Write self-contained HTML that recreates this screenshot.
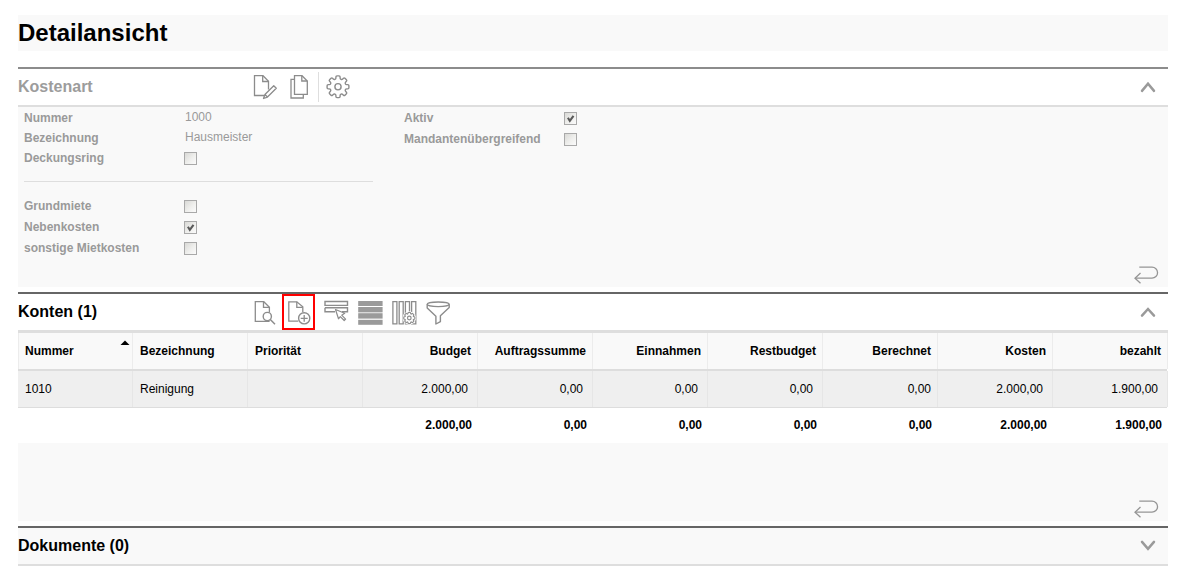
<!DOCTYPE html>
<html><head><meta charset="utf-8">
<style>
*{margin:0;padding:0;box-sizing:border-box}
html,body{width:1185px;height:570px;overflow:hidden;background:#fff;font-family:"Liberation Sans",sans-serif;}
.a{position:absolute}
.t{white-space:nowrap;line-height:1}
.line{left:18px;width:1150px}
.lbl{font-size:12px;font-weight:bold;color:#9a9a9a}
.val{font-size:12px;color:#9a9a9a}
.cb{width:13px;height:13px;border:1px solid #a9a9a9;background:linear-gradient(135deg,#d9d9d6 0%,#efefed 55%,#fbfbfb 100%)}
.th{font-size:12px;font-weight:bold;color:#000}
.td{font-size:12px;color:#000}
.r{text-align:right}
</style></head><body>
<div class="a" style="left:18px;top:15px;width:1150px;height:36px;background:#f9f9f9"></div>
<div class="a t" style="left:18px;top:21px;font-size:24px;font-weight:bold;color:#000">Detailansicht</div>
<div class="a line" style="top:67px;height:2px;background:#8c8c8c"></div>
<div class="a t" style="left:18px;top:79px;font-size:16px;font-weight:bold;color:#9c9c9c">Kostenart</div>
<div class="a" style="left:318px;top:72px;width:1px;height:30px;background:#dedede"></div>
<div class="a line" style="top:105px;height:2px;background:#dedede"></div>
<div class="a line" style="top:107px;height:180px;background:#f9f9f9"></div>
<div class="a t lbl" style="left:24px;top:112px">Nummer</div>
<div class="a t val" style="left:185px;top:111px">1000</div>
<div class="a t lbl" style="left:24px;top:132px">Bezeichnung</div>
<div class="a t val" style="left:185px;top:131px">Hausmeister</div>
<div class="a t lbl" style="left:24px;top:152px">Deckungsring</div>
<div class="a cb" style="left:184px;top:152px"></div>
<div class="a" style="left:24px;top:181px;width:349px;height:1px;background:#dedede"></div>
<div class="a t lbl" style="left:24px;top:200px">Grundmiete</div>
<div class="a cb" style="left:184px;top:200px"></div>
<div class="a t lbl" style="left:24px;top:221px">Nebenkosten</div>
<div class="a cb" style="left:184px;top:221px"></div>
<svg class="a" style="left:184px;top:221px" width="13" height="13"><path d="M3.9,5.8 L5.8,8.9 L9.5,3.8" stroke="#5a5a5a" stroke-width="2.1" fill="none"/></svg>
<div class="a t lbl" style="left:24px;top:242px">sonstige Mietkosten</div>
<div class="a cb" style="left:184px;top:242px"></div>
<div class="a t lbl" style="left:404px;top:112px">Aktiv</div>
<div class="a cb" style="left:564px;top:112px"></div>
<svg class="a" style="left:564px;top:112px" width="13" height="13"><path d="M3.9,5.8 L5.8,8.9 L9.5,3.8" stroke="#5a5a5a" stroke-width="2.1" fill="none"/></svg>
<div class="a t lbl" style="left:404px;top:133px">Mandantenübergreifend</div>
<div class="a cb" style="left:564px;top:133px"></div>
<div class="a line" style="top:292px;height:2px;background:#666"></div>
<div class="a t" style="left:18px;top:304px;font-size:16px;font-weight:bold;color:#000">Konten (1)</div>
<div class="a" style="left:282px;top:294px;width:33px;height:36px;border:2px solid #f00"></div>
<div class="a line" style="top:330px;height:3px;background:#dedede"></div>
<div class="a" style="left:18px;width:1149px;top:333px;height:36px;background:#f9f9f9"></div>
<div class="a" style="left:18px;width:1149px;top:369px;height:2px;background:#dddddd"></div>
<div class="a" style="left:18px;width:1149px;top:371px;height:36px;background:#efefef"></div>
<div class="a" style="left:18px;width:1149px;top:407px;height:1px;background:#dddddd"></div>
<div class="a" style="left:18px;top:333px;width:1px;height:36px;background:#ececec"></div>
<div class="a" style="left:132px;top:333px;width:1px;height:36px;background:#ececec"></div>
<div class="a" style="left:132px;top:371px;width:1px;height:36px;background:#e6e6e6"></div>
<div class="a t th" style="left:25px;top:345px">Nummer</div>
<div class="a t td" style="left:25px;top:383px">1010</div>
<div class="a" style="left:247px;top:333px;width:1px;height:36px;background:#ececec"></div>
<div class="a" style="left:247px;top:371px;width:1px;height:36px;background:#e6e6e6"></div>
<div class="a t th" style="left:140px;top:345px">Bezeichnung</div>
<div class="a t td" style="left:140px;top:383px">Reinigung</div>
<div class="a" style="left:362px;top:333px;width:1px;height:36px;background:#ececec"></div>
<div class="a" style="left:362px;top:371px;width:1px;height:36px;background:#e6e6e6"></div>
<div class="a t th" style="left:255px;top:345px">Priorität</div>
<div class="a" style="left:477px;top:333px;width:1px;height:36px;background:#ececec"></div>
<div class="a" style="left:477px;top:371px;width:1px;height:36px;background:#e6e6e6"></div>
<div class="a t th r" style="left:363px;width:108px;top:345px">Budget</div>
<div class="a t td r" style="left:363px;width:105px;top:383px">2.000,00</div>
<div class="a t th r" style="left:363px;width:109px;top:419px">2.000,00</div>
<div class="a" style="left:592px;top:333px;width:1px;height:36px;background:#ececec"></div>
<div class="a" style="left:592px;top:371px;width:1px;height:36px;background:#e6e6e6"></div>
<div class="a t th r" style="left:478px;width:108px;top:345px">Auftragssumme</div>
<div class="a t td r" style="left:478px;width:105px;top:383px">0,00</div>
<div class="a t th r" style="left:478px;width:109px;top:419px">0,00</div>
<div class="a" style="left:707px;top:333px;width:1px;height:36px;background:#ececec"></div>
<div class="a" style="left:707px;top:371px;width:1px;height:36px;background:#e6e6e6"></div>
<div class="a t th r" style="left:593px;width:108px;top:345px">Einnahmen</div>
<div class="a t td r" style="left:593px;width:105px;top:383px">0,00</div>
<div class="a t th r" style="left:593px;width:109px;top:419px">0,00</div>
<div class="a" style="left:822px;top:333px;width:1px;height:36px;background:#ececec"></div>
<div class="a" style="left:822px;top:371px;width:1px;height:36px;background:#e6e6e6"></div>
<div class="a t th r" style="left:708px;width:108px;top:345px">Restbudget</div>
<div class="a t td r" style="left:708px;width:105px;top:383px">0,00</div>
<div class="a t th r" style="left:708px;width:109px;top:419px">0,00</div>
<div class="a" style="left:937px;top:333px;width:1px;height:36px;background:#ececec"></div>
<div class="a" style="left:937px;top:371px;width:1px;height:36px;background:#e6e6e6"></div>
<div class="a t th r" style="left:823px;width:108px;top:345px">Berechnet</div>
<div class="a t td r" style="left:823px;width:108px;top:383px">0,00</div>
<div class="a t th r" style="left:823px;width:109px;top:419px">0,00</div>
<div class="a" style="left:1052px;top:333px;width:1px;height:36px;background:#ececec"></div>
<div class="a" style="left:1052px;top:371px;width:1px;height:36px;background:#e6e6e6"></div>
<div class="a t th r" style="left:938px;width:108px;top:345px">Kosten</div>
<div class="a t td r" style="left:938px;width:105px;top:383px">2.000,00</div>
<div class="a t th r" style="left:938px;width:109px;top:419px">2.000,00</div>
<div class="a" style="left:1167px;top:333px;width:1px;height:36px;background:#ececec"></div>
<div class="a" style="left:1167px;top:371px;width:1px;height:36px;background:#e6e6e6"></div>
<div class="a t th r" style="left:1053px;width:108px;top:345px">bezahlt</div>
<div class="a t td r" style="left:1053px;width:105px;top:383px">1.900,00</div>
<div class="a t th r" style="left:1053px;width:109px;top:419px">1.900,00</div>
<svg class="a" style="left:0;top:0" width="1185" height="570"><path d="M120.5,345 L125,340.5 L129.5,345Z" fill="#000"/></svg>
<div class="a line" style="top:443px;height:78px;background:#f9f9f9"></div>
<div class="a line" style="top:526px;height:2px;background:#666"></div>
<div class="a line" style="top:528px;height:36px;background:#f9f9f9"></div>
<div class="a t" style="left:18px;top:538px;font-size:16px;font-weight:bold;color:#000">Dokumente (0)</div>
<div class="a line" style="top:564px;height:2px;background:#dedede"></div>
<svg class="a" style="left:0;top:0" width="1185" height="570"><path d="M264,95.5 H254.5 V75.7 H263 L268.5,81.2 V89.5" stroke="#8c8c8c" stroke-width="1.3" fill="none" /><path d="M262.7,75.7 V81.5 H268.5" stroke="#8c8c8c" stroke-width="1.3" fill="none" /><path d="M263.5,98.5 L264.92,94.53999999999999 L273.75,85.71000000000001 L276.29,88.25 L267.46,97.08 Z M264.92,94.53999999999999 L267.46,97.08" stroke="#8c8c8c" stroke-width="1.3" fill="none" stroke-linejoin="round"/><path d="M294.5,79.3 H291 V98 H303.3 V94.5" stroke="#8c8c8c" stroke-width="1.3" fill="none" /><path d="M294.5,94.3 V75.7 H302 L307.3,81 V94.3 Z" stroke="#8c8c8c" stroke-width="1.3" fill="none" /><path d="M301.8,75.7 V81 H307.3" stroke="#8c8c8c" stroke-width="1.3" fill="none" /><path d="M334.96,79.42Q335.90,79.03 335.90,77.93L335.90,76.95Q335.90,75.85 337.00,75.85L339.00,75.85Q340.10,75.85 340.10,76.95L340.10,77.93Q340.10,79.03 341.04,79.42L341.04,79.42Q341.97,79.81 342.75,79.03L343.44,78.34Q344.22,77.56 345.00,78.34L346.41,79.75Q347.19,80.53 346.41,81.31L345.72,82.00Q344.94,82.78 345.33,83.71L345.33,83.71Q345.72,84.65 346.82,84.65L347.80,84.65Q348.90,84.65 348.90,85.75L348.90,87.75Q348.90,88.85 347.80,88.85L346.82,88.85Q345.72,88.85 345.33,89.79L345.33,89.79Q344.94,90.72 345.72,91.50L346.41,92.19Q347.19,92.97 346.41,93.75L345.00,95.16Q344.22,95.94 343.44,95.16L342.75,94.47Q341.97,93.69 341.04,94.08L341.04,94.08Q340.10,94.47 340.10,95.57L340.10,96.55Q340.10,97.65 339.00,97.65L337.00,97.65Q335.90,97.65 335.90,96.55L335.90,95.57Q335.90,94.47 334.96,94.08L334.96,94.08Q334.03,93.69 333.25,94.47L332.56,95.16Q331.78,95.94 331.00,95.16L329.59,93.75Q328.81,92.97 329.59,92.19L330.28,91.50Q331.06,90.72 330.67,89.79L330.67,89.79Q330.28,88.85 329.18,88.85L328.20,88.85Q327.10,88.85 327.10,87.75L327.10,85.75Q327.10,84.65 328.20,84.65L329.18,84.65Q330.28,84.65 330.67,83.71L330.67,83.71Q331.06,82.78 330.28,82.00L329.59,81.31Q328.81,80.53 329.59,79.75L331.00,78.34Q331.78,77.56 332.56,78.34L333.25,79.03Q334.03,79.81 334.96,79.42Z" stroke="#8c8c8c" stroke-width="1.4" fill="none" stroke-linejoin="round"/><circle cx="338" cy="86.75" r="3.1" stroke="#8c8c8c" stroke-width="1.4" fill="none"/><path d="M1142,90.9 L1148,83.8 L1154,90.9" stroke="#9a9a9a" stroke-width="2.5" fill="none" stroke-linecap="round"/><path d="M1142,315.6 L1148,309 L1154,315.6" stroke="#9a9a9a" stroke-width="2.5" fill="none" stroke-linecap="round"/><path d="M1142,541.9 L1148,548.9 L1154,541.9" stroke="#9a9a9a" stroke-width="2.5" fill="none" stroke-linecap="round"/><path d="M1139.3,267.1 H1152 A5.55,5.55 0 0 1 1152,278.2 H1135" stroke="#959595" stroke-width="1.3" fill="none" /><path d="M1140.5,273 L1135,278.2 L1140.5,283.3" stroke="#959595" stroke-width="1.3" fill="none" /><path d="M1139.3,501.1 H1152 A5.55,5.55 0 0 1 1152,512.2 H1135" stroke="#959595" stroke-width="1.3" fill="none" /><path d="M1140.5,507 L1135,512.2 L1140.5,517.3" stroke="#959595" stroke-width="1.3" fill="none" /><path d="M269.6,321.4 H255.3 V301.7 H263.8 L269.4,307.2 V312.4" stroke="#8c8c8c" stroke-width="1.3" fill="none" /><path d="M263.5,301.7 V307.3 H269.4" stroke="#8c8c8c" stroke-width="1.3" fill="none" /><circle cx="267.3" cy="316.5" r="4.1" stroke="#8c8c8c" stroke-width="1.4" fill="#fff"/><path d="M270.3,319.5 L275,324.2" stroke="#8c8c8c" stroke-width="1.5" fill="none" /><path d="M298.2,321.1 H288.8 V301.8 H296.8 L302.8,306.8 V312.3" stroke="#8c8c8c" stroke-width="1.3" fill="none" /><path d="M296.8,301.8 V307.4 H302.8" stroke="#8c8c8c" stroke-width="1.3" fill="none" /><circle cx="304.2" cy="318.3" r="5.6" stroke="#8c8c8c" stroke-width="1.4" fill="none"/><path d="M300.7,318.3 H307.7 M304.2,314.9 V321.7" stroke="#8c8c8c" stroke-width="1.3" fill="none" /><path d="M325,301.5 H347.5 V305.4 H325 Z" stroke="#8c8c8c" stroke-width="1.4" fill="none" /><path d="M325,307.8 H347.5 V311.7 H342 M335,311.7 H325 V307.8" stroke="#8c8c8c" stroke-width="1.4" fill="none" /><path d="M335.5,309.5 L338.5,318.8 L340.3,316.6 L344.2,320.5 L345.6,319.1 L341.7,315.2 L344.7,313.3 Z" stroke="#8c8c8c" stroke-width="1.2" fill="none" stroke-linejoin="round"/><rect x="358.2" y="301" width="24.4" height="5" fill="#9a9a9a"/><rect x="358.2" y="307" width="24.4" height="5" fill="#9a9a9a"/><rect x="358.2" y="312.3" width="24.4" height="0.7" fill="#c8c8c8"/><rect x="358.2" y="313.2" width="24.4" height="5.4" fill="#9a9a9a"/><rect x="358.2" y="319.8" width="24.4" height="5" fill="#9a9a9a"/><path d="M392.9,301.7 H396.9 V323.8 H392.9 Z" stroke="#8c8c8c" stroke-width="1.3" fill="none" /><path d="M399.2,301.7 H403.2 V323.8 H399.2 Z" stroke="#8c8c8c" stroke-width="1.3" fill="none" /><path d="M405.4,301.7 H409.5 V323.8 H405.4 Z" stroke="#8c8c8c" stroke-width="1.3" fill="none" /><path d="M411.6,301.7 H415.8 V323.8 H411.6 Z" stroke="#8c8c8c" stroke-width="1.3" fill="none" /><path d="M408.01,311.53L408.01,311.53L410.59,311.53L410.59,311.53L412.97,312.51L412.97,312.51L414.79,314.33L414.79,314.33L415.77,316.71L415.77,316.71L415.77,319.29L415.77,319.29L414.79,321.67L414.79,321.67L412.97,323.49L412.97,323.49L410.59,324.47L410.59,324.47L408.01,324.47L408.01,324.47L405.63,323.49L405.63,323.49L403.81,321.67L403.81,321.67L402.83,319.29L402.83,319.29L402.83,316.71L402.83,316.71L403.81,314.33L403.81,314.33L405.63,312.51L405.63,312.51Z" fill="#fff" stroke="none"/><circle cx="409.3" cy="318" r="6.3" fill="#fff"/><path d="M407.66,314.04Q408.00,313.90 408.00,313.30L408.00,313.05Q408.00,312.45 408.60,312.45L410.00,312.45Q410.60,312.45 410.60,313.05L410.60,313.30Q410.60,313.90 410.94,314.04L410.94,314.04Q411.28,314.18 411.70,313.76L411.88,313.58Q412.31,313.16 412.73,313.58L413.72,314.57Q414.14,314.99 413.72,315.42L413.54,315.60Q413.12,316.02 413.26,316.36L413.26,316.36Q413.40,316.70 414.00,316.70L414.25,316.70Q414.85,316.70 414.85,317.30L414.85,318.70Q414.85,319.30 414.25,319.30L414.00,319.30Q413.40,319.30 413.26,319.64L413.26,319.64Q413.12,319.98 413.54,320.40L413.72,320.58Q414.14,321.01 413.72,321.43L412.73,322.42Q412.31,322.84 411.88,322.42L411.70,322.24Q411.28,321.82 410.94,321.96L410.94,321.96Q410.60,322.10 410.60,322.70L410.60,322.95Q410.60,323.55 410.00,323.55L408.60,323.55Q408.00,323.55 408.00,322.95L408.00,322.70Q408.00,322.10 407.66,321.96L407.66,321.96Q407.32,321.82 406.90,322.24L406.72,322.42Q406.29,322.84 405.87,322.42L404.88,321.43Q404.46,321.01 404.88,320.58L405.06,320.40Q405.48,319.98 405.34,319.64L405.34,319.64Q405.20,319.30 404.60,319.30L404.35,319.30Q403.75,319.30 403.75,318.70L403.75,317.30Q403.75,316.70 404.35,316.70L404.60,316.70Q405.20,316.70 405.34,316.36L405.34,316.36Q405.48,316.02 405.06,315.60L404.88,315.42Q404.46,314.99 404.88,314.57L405.87,313.58Q406.29,313.16 406.72,313.58L406.90,313.76Q407.32,314.18 407.66,314.04Z" stroke="#8c8c8c" stroke-width="1.1" fill="none" stroke-linejoin="round"/><circle cx="409.3" cy="318" r="1.8" stroke="#8c8c8c" stroke-width="1.2" fill="none"/><ellipse cx="438.2" cy="304.3" rx="11" ry="2.3" stroke="#8c8c8c" stroke-width="1.4" fill="none"/><path d="M427.2,304.3 V308 L435.9,316.2 V324 L440.4,321.7 V315.8 L449.2,307.6 V304.3" stroke="#8c8c8c" stroke-width="1.4" fill="none" stroke-linejoin="round"/></svg>
</body></html>
